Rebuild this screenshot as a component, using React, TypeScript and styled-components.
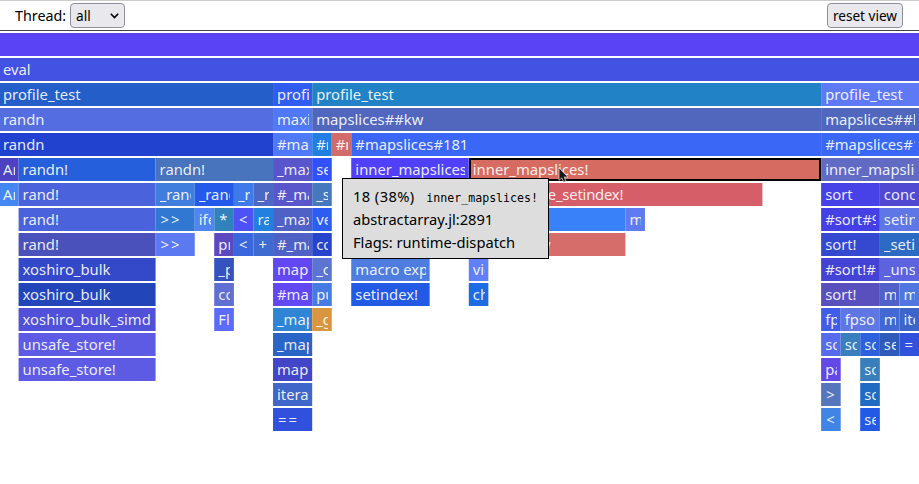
import React from "react";
import styled, { createGlobalStyle } from "styled-components";

const SAMPLES = 47;
const GRAPH_WIDTH = 920;
const GRAPH_OFFSET = -1;

type Frame = [start: number, span: number, color: string, name: string, hovered?: boolean];

const rows: Frame[][] = [
  [[0, 47, "#5a43f5", ""]],
  [[0, 47, "#4452e4", "eval"]],
  [
    [0, 14, "#245ec9", "profile_test"],
    [14, 2, "#315cf0", "profile_test"],
    [16, 26, "#2182c6", "profile_test"],
    [42, 5, "#5d79f6", "profile_test"],
  ],
  [
    [0, 14, "#546de0", "randn"],
    [14, 2, "#4f79f6", "maximum"],
    [16, 26, "#5067bd", "mapslices##kw"],
    [42, 5, "#5067bd", "mapslices##kw"],
  ],
  [
    [0, 14, "#2142cf", "randn"],
    [14, 2, "#4f79f6", "#maximum#"],
    [16, 1, "#217fe2", "#mapslices"],
    [17, 1, "#d26c69", "#mapslices"],
    [18, 24, "#3b67f7", "#mapslices#181"],
    [42, 5, "#3b67f7", "#mapslices#181"],
  ],
  [
    [0, 1, "#4d42c1", "Array"],
    [1, 7, "#265fdb", "randn!"],
    [8, 6, "#4774bc", "randn!"],
    [14, 2, "#5956cb", "_maximum"],
    [16, 1, "#3051fb", "setindex!"],
    [18, 6, "#5040fa", "inner_mapslices!"],
    [24, 18, "#d66c61", "inner_mapslices!", true],
    [42, 5, "#616bc4", "inner_mapslices!"],
  ],
  [
    [0, 1, "#4487f3", "Array"],
    [1, 7, "#4a63dc", "rand!"],
    [8, 2, "#3f7edc", "_rand!"],
    [10, 2, "#2459ea", "_rand!"],
    [12, 1, "#3e7aea", "_rand"],
    [13, 1, "#4b68c4", "_rand"],
    [14, 2, "#5956cb", "#_maximum"],
    [16, 1, "#4678bd", "_setindex!"],
    [24, 15, "#d65e69", "concatenate_setindex!"],
    [42, 3, "#4642e8", "sort"],
    [45, 2, "#5149d2", "concatenate"],
  ],
  [
    [1, 7, "#4a63dc", "rand!"],
    [8, 2, "#3178d3", ">>"],
    [10, 1, "#5184f3", "ifelse"],
    [11, 1, "#3181bc", "*"],
    [12, 1, "#4d51f6", "<"],
    [13, 1, "#2480df", "rand"],
    [14, 2, "#4f61c4", "_maximum"],
    [16, 1, "#2d5cf3", "vect"],
    [24, 8, "#3881f8", "dotview"],
    [32, 1, "#607aef", "materialize!"],
    [42, 3, "#4540e5", "#sort#9"],
    [45, 2, "#5f76e6", "setindex!"],
  ],
  [
    [1, 7, "#4a51ba", "rand!"],
    [8, 2, "#5b79f0", ">>"],
    [11, 1, "#5d49bf", "promote"],
    [12, 1, "#3b67dc", "<"],
    [13, 1, "#3d6bd0", "+"],
    [14, 2, "#4f61c4", "#_maximum"],
    [16, 1, "#2944cc", "copy"],
    [24, 8, "#d66d6b", "maybeview"],
    [42, 3, "#3449d0", "sort!"],
    [45, 2, "#2b6bc3", "_setindex!"],
  ],
  [
    [1, 7, "#3449ca", "xoshiro_bulk"],
    [11, 1, "#3552bd", "_promote"],
    [14, 2, "#6248f3", "mapreduce"],
    [16, 1, "#5c75d2", "_copy"],
    [18, 4, "#4e7ddf", "macro expansion"],
    [24, 1, "#6080fa", "view"],
    [42, 3, "#4543d5", "#sort!#"],
    [45, 2, "#5d62df", "_unsafe_setindex!"],
  ],
  [
    [1, 7, "#2246ba", "xoshiro_bulk"],
    [11, 1, "#6070d2", "convert"],
    [14, 2, "#6248f3", "#mapreduce"],
    [16, 1, "#477be3", "push!"],
    [18, 4, "#225ae6", "setindex!"],
    [24, 1, "#1e6ce3", "checkbounds"],
    [42, 3, "#594fbd", "sort!"],
    [45, 1, "#5062ca", "macro expansion"],
    [46, 1, "#5077df", "macro expansion"],
  ],
  [
    [1, 7, "#5050d8", "xoshiro_bulk_simd"],
    [11, 1, "#5b6bfb", "Float64"],
    [14, 2, "#3084d4", "_mapreduce"],
    [16, 1, "#d9963f", "_growend!"],
    [42, 1, "#405de9", "fpsort!"],
    [43, 2, "#5f77e5", "fpsort!"],
    [45, 1, "#4168d3", "macro"],
    [46, 1, "#3d65c9", "iterate"],
  ],
  [
    [1, 7, "#5d5be4", "unsafe_store!"],
    [14, 2, "#2964c6", "_mapreduce"],
    [42, 1, "#576bed", "sort!"],
    [43, 1, "#397fbe", "sort!"],
    [44, 1, "#2c60dc", "sort!"],
    [45, 1, "#2e5bb9", "setindex!"],
    [46, 1, "#3151dc", "="],
  ],
  [
    [1, 7, "#5d5be4", "unsafe_store!"],
    [14, 2, "#4245c7", "mapreduce_impl"],
    [42, 1, "#6248e7", "partition"],
    [44, 1, "#397fbe", "sort!"],
  ],
  [
    [14, 2, "#4066c9", "iterate"],
    [42, 1, "#5575bd", ">"],
    [44, 1, "#216bc3", "sort!"],
  ],
  [
    [14, 2, "#3151dc", "=="],
    [42, 1, "#4085e6", "<"],
    [44, 1, "#225ae6", "setindex!"],
  ],
];

/* Feathers the vertical edges of a frame that fall between two pixels. */
const feather = (start: number, span: number, color: string) => {
  const at = (k: number) => (k * GRAPH_WIDTH) / SAMPLES + GRAPH_OFFSET;
  const left = at(start);
  const right = at(start + span);
  const lf = left - Math.floor(left);
  const rf = right - Math.floor(right);
  const tint = (a: number) =>
    color + Math.round(a * 255).toString(16).padStart(2, "0");
  return [
    lf < 0.5
      ? `inset 1px 0 0 rgba(255,255,255,${(lf * (1 - lf)).toFixed(3)})`
      : `-1px 0 0 ${tint(1 - lf)}`,
    rf >= 0.5
      ? `inset -1px 0 0 rgba(255,255,255,${(1 - rf).toFixed(3)})`
      : `1px 0 0 ${tint(rf)}`,
  ].join(", ");
};

/* Operators are set loosely; very long names are tightened a little. */
const tracking = (name: string) => {
  if (/^[<>=+*]+$/.test(name)) return "2px";
  return name.length > 20 ? "-0.2px" : "normal";
};

const GlobalStyle = createGlobalStyle`
  html, body { margin: 0; background: #fff; }
  body { overflow: hidden; font-family: "Noto Sans", sans-serif; color: #000; }
`;

const Page = styled.div`
  position: relative;
  width: 919px;
  height: 484px;
  overflow: hidden;
`;

const Toolbar = styled.header`
  box-sizing: border-box;
  height: 31px;
  padding: 0 16px 0 15px;
  display: flex;
  align-items: center;
  border-top: 1px solid #ccc;
  border-bottom: 1px solid #444;
`;

const ThreadLabel = styled.span`
  width: 55px;
  font-size: 14.3px;
  line-height: 22px;
`;

const Control = styled.button`
  box-sizing: border-box;
  height: 25px;
  padding: 0 5px;
  border: 1px solid #8f8f9d;
  border-radius: 4px;
  background: #e9e9ed;
  color: #000;
  font: 13.6px/22px "Noto Sans", sans-serif;
  white-space: nowrap;
`;

const ThreadSelect = styled(Control)`
  width: 55px;
  display: flex;
  align-items: center;
  justify-content: space-between;
`;

const ResetButton = styled(Control)`
  width: 76px;
  padding: 0;
  margin-left: auto;
`;

const Graph = styled.main`
  width: ${GRAPH_WIDTH}px;
  margin: 2px 0 0 ${GRAPH_OFFSET}px;
  display: grid;
  grid-auto-rows: 23px;
  row-gap: 2px;
`;

const Row = styled.div`
  display: grid;
  grid-template-columns: repeat(${SAMPLES}, minmax(0, 1fr));
`;

const Block = styled.div<{ $start: number; $span: number; $color: string; $hovered?: boolean }>`
  grid-column: ${(p) => p.$start + 1} / span ${(p) => p.$span};
  min-width: 0;
  padding: 0 3.7px 0 4px;
  background: ${(p) => p.$color};
  box-shadow: ${(p) =>
    p.$hovered ? "inset 0 0 0 2px #000" : feather(p.$start, p.$span, p.$color)};
`;

const Label = styled.span<{ $tracking: string }>`
  display: block;
  overflow: hidden;
  white-space: nowrap;
  font-size: 14.8px;
  line-height: 23px;
  letter-spacing: ${(p) => p.$tracking};
  text-indent: ${(p) => (p.$tracking === "2px" ? "1px" : "0")};
  color: rgba(255, 255, 255, 0.9);
`;

const Tooltip = styled.div`
  position: absolute;
  left: 342px;
  top: 178px;
  box-sizing: border-box;
  width: 207px;
  height: 81px;
  padding: 6px 10px;
  border: 1px solid #000;
  background: #ddd;
  display: grid;
  grid-auto-rows: 23px;
  font-size: 14.7px;
  line-height: 23px;
  white-space: nowrap;
`;

const TooltipTitle = styled.div`
  display: flex;
  align-items: baseline;
  justify-content: space-between;
  letter-spacing: 0.4px;
`;

const FunctionName = styled.code`
  font-family: "DejaVu Sans Mono", monospace;
  font-size: 11.6px;
  line-height: 1;
  letter-spacing: 0;
`;

const Pointer = styled.svg`
  position: absolute;
  left: 557px;
  top: 166px;
`;

export default function App() {
  return (
    <Page>
      <GlobalStyle />
      <Toolbar>
        <ThreadLabel>Thread:</ThreadLabel>
        <ThreadSelect>
          all
          <svg width="9" height="6" viewBox="0 0 9 6">
            <path d="M0.8 0.8 4.5 4.5 8.2 0.8" fill="none" stroke="#000" strokeWidth="1.6" />
          </svg>
        </ThreadSelect>
        <ResetButton>reset view</ResetButton>
      </Toolbar>
      <Graph>
        {rows.map((frames, depth) => (
          <Row key={depth}>
            {frames.map(([start, span, color, name, hovered]) => (
              <Block key={start} $start={start} $span={span} $color={color} $hovered={hovered}>
                <Label $tracking={tracking(name)}>{name}</Label>
              </Block>
            ))}
          </Row>
        ))}
      </Graph>
      <Tooltip>
        <TooltipTitle>
          18 (38%) <FunctionName>inner_mapslices!</FunctionName>
        </TooltipTitle>
        <div>abstractarray.jl:2891</div>
        <div>Flags: runtime-dispatch</div>
      </Tooltip>
      <Pointer width="13" height="18" viewBox="0 0 13 18">
        <path
          d="M2 2V14.4L4.8 11.9 6.6 16 9 15 7.2 11H11Z"
          fill="#1a1a1a"
          stroke="#ddd"
          strokeWidth="0.7"
        />
      </Pointer>
    </Page>
  );
}
